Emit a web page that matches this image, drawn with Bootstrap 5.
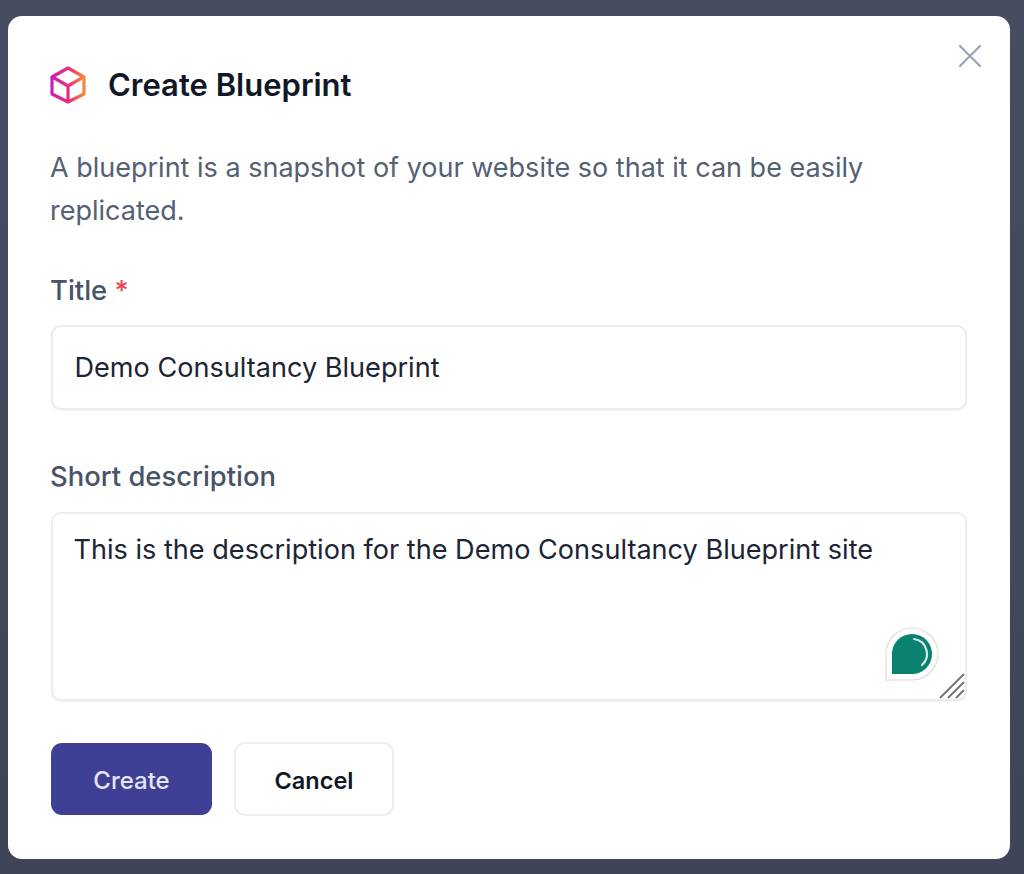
<!DOCTYPE html>
<html lang="en">
<head>
<meta charset="UTF-8">
<title>Create Blueprint</title>
<link href="https://cdn.jsdelivr.net/npm/bootstrap@5.3.2/dist/css/bootstrap.min.css" rel="stylesheet">
<style>
    html, body { height: 874px; overflow: hidden; }
    body {
        background: linear-gradient(#474d61, #3f4556);
        font-family: Inter, "Liberation Sans", sans-serif;
        padding: 16px 14px 15px 8px;
    }
    .modal-box {
        height: 843px;
        background: #fff;
        border-radius: 14px;
        padding: 50px 43px 0 43px;
    }
    .close-x { position: absolute; top: 28px; right: 28px; width: 24px; height: 24px; }
    .modal-head { height: 38px; gap: 22px; }
    .modal-head svg { margin-left: -1px; }
    .modal-head h1 { font-size: 31px; font-weight: 600; color: #101828; margin: 0; }
    .intro { font-size: 27px; line-height: 43px; color: #546073; margin: 42px 0 0 -1px; }
    .lbl { font-size: 27.4px; font-weight: 500; line-height: 32px; color: #475467; margin: 0 0 0 -1px; }
    .lbl span { color: #e5484d; }
    .field {
        border: 2px solid #e9ecf1;
        border-radius: 10px;
        font-size: 27.1px;
        color: #1d2433;
        padding: 0 21.5px;
        box-shadow: 0 1px 2px rgba(16, 24, 40, .05);
    }
    .title-block { margin-top: 42px; }
    .title-field { height: 85px; margin-top: 19px; margin-bottom: 50px; }
    .desc-wrap { margin-top: 20px; }
    .desc-field { height: 189px; resize: none; padding: 16px 20.5px; line-height: 40px; }
    .badge-dot { position: absolute; right: 28px; bottom: 20px; width: 54px; height: 54px; }
    .grip { position: absolute; right: 2px; bottom: 2px; width: 26px; height: 26px; }
    .btn-create, .btn-create:hover {
        width: 161px; height: 72px;
        background: #3e4095;
        border: 0;
        border-radius: 11px;
        color: #e3e5f5;
        font-size: 24px;
        font-weight: 500;
        padding-top: 10px;
    }
    .btn-cancel, .btn-cancel:hover {
        width: 160px; height: 74px;
        background: #fff;
        border: 2px solid #eceef2;
        border-radius: 11px;
        color: #101828;
        font-size: 23.5px;
        font-weight: 600;
        padding-top: 10px;
    }
    .actions { margin-top: 41px; gap: 22px; }
</style>
</head>
<body>

<div class="modal-box position-relative">
    <svg class="close-x" viewBox="0 0 24 24" fill="none" stroke="#98a5b6" stroke-width="2.2" stroke-linecap="round">
        <path d="M2 2 22 22M22 2 2 22"/>
    </svg>

    <div class="modal-head d-flex align-items-center">
        <svg width="36" height="38" viewBox="0 0 36 38" fill="none" stroke="url(#cube)" stroke-width="3.2" stroke-linejoin="round">
            <defs>
                <linearGradient id="cube" x1="0" y1="0" x2="1" y2="0">
                    <stop offset="0" stop-color="#c81fb4"/>
                    <stop offset=".55" stop-color="#ec2f78"/>
                    <stop offset="1" stop-color="#f58a35"/>
                </linearGradient>
            </defs>
            <path d="M18 2 34 11V28L18 36 2 28V11Z"/>
            <path d="M2.5 11 18 20 33.5 11M18 20V36"/>
        </svg>
        <h1>Create Blueprint</h1>
    </div>

    <p class="intro">A blueprint is a snapshot of your website so that it can be easily replicated.</p>

    <form>
        <div class="title-block">
            <label class="lbl d-block" for="bpTitle">Title <span>*</span></label>
            <input id="bpTitle" type="text" class="form-control field title-field" value="Demo Consultancy Blueprint">
        </div>
        <label class="lbl d-block" for="bpDesc">Short description</label>
        <div class="desc-wrap position-relative">
            <textarea id="bpDesc" class="form-control field desc-field">This is the description for the Demo Consultancy Blueprint site</textarea>
            <svg class="badge-dot" viewBox="0 0 54 54">
                <path d="M1 53V27A26 26 0 1 1 27 53Z" fill="#fff" stroke="#e6e3e8" stroke-width="1.5"/>
                <path d="M7 47V27A20 20 0 1 1 27 47Z" fill="#0b8170"/>
                <path d="M29 12A15 15 0 0 1 37 38" fill="none" stroke="#d5ebe6" stroke-width="2.2" stroke-linecap="round"/>
            </svg>
            <svg class="grip" viewBox="0 0 26 26" stroke="#777" stroke-width="2">
                <path d="M1 25 25 1M9 25 25 9M17 25 25 17"/>
            </svg>
        </div>
        <div class="actions d-flex align-items-center">
            <button type="button" class="btn btn-create">Create</button>
            <button type="button" class="btn btn-cancel">Cancel</button>
        </div>
    </form>
</div>

</body>
</html>
